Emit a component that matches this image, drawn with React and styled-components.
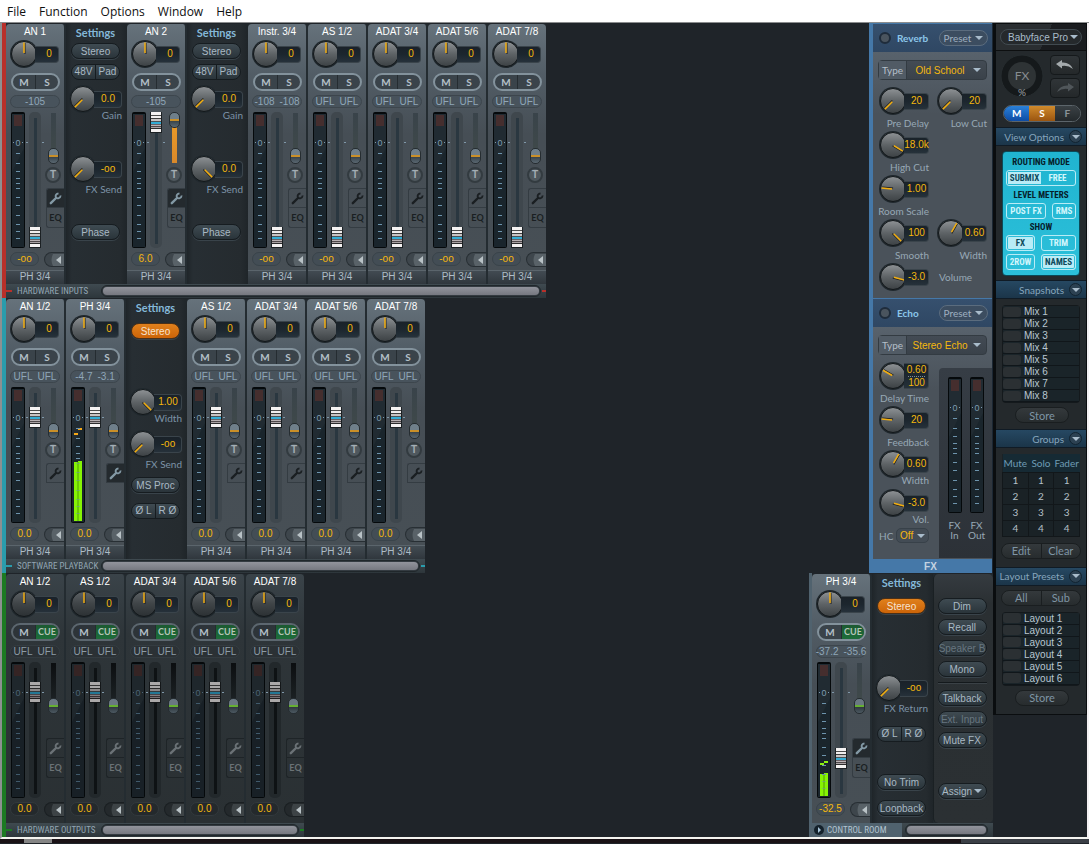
import React from "react";
import styled, { createGlobalStyle } from "styled-components";

const inputs = [
    { name: "AN 1", level: ["-105"], gain: "-oo", fader: 0, open: true, settings: { kind: "mic", gain: "0.0", send: "-oo", sendAngle: -135 } },
    { name: "AN 2", level: ["-105"], gain: "6.0", fader: 115, trim: 36, open: true, settings: { kind: "mic", gain: "0.0", send: "0.0", sendAngle: 135 } },
    { name: "Instr. 3/4", level: ["-108", "-108"], gain: "-oo", fader: 0 },
    { name: "AS 1/2", level: ["UFL", "UFL"], gain: "-oo", fader: 0 },
    { name: "ADAT 3/4", level: ["UFL", "UFL"], gain: "-oo", fader: 0 },
    { name: "ADAT 5/6", level: ["UFL", "UFL"], gain: "-oo", fader: 0 },
    { name: "ADAT 7/8", level: ["UFL", "UFL"], gain: "-oo", fader: 0 },
];

const playback = [
    { name: "AN 1/2", level: ["UFL", "UFL"], gain: "0.0", fader: 95 },
    { name: "PH 3/4", level: ["-4.7", "-3.1"], gain: "0.0", fader: 95, open: true, settings: { kind: "play" }, signal: { top: 75, peaks: [46, 41], peakColor: "#f5a818" } },
    { name: "AS 1/2", level: ["UFL", "UFL"], gain: "0.0", fader: 95 },
    { name: "ADAT 3/4", level: ["UFL", "UFL"], gain: "0.0", fader: 95 },
    { name: "ADAT 5/6", level: ["UFL", "UFL"], gain: "0.0", fader: 95 },
    { name: "ADAT 7/8", level: ["UFL", "UFL"], gain: "0.0", fader: 95 },
];

const outputs = ["AN 1/2", "AS 1/2", "ADAT 3/4", "ADAT 5/6", "ADAT 7/8"].map((name) => (
    { name, level: ["UFL", "UFL"], gain: "0.0", fader: 95 }
));

const phones = { name: "PH 3/4", level: ["-37.2", "-35.6"], gain: "-32.5", fader: 29, open: true, signal: { top: 112, peaks: [101, 99], peakColor: "#8cf010" } };

const ticks = [41, 51, 59, 66, 71, 76, 85, 93, 103, 112, 119, 126];

const Meter = ({ signal, dim }) => (
    <MeterSvg width="14" height="136" viewBox="0 0 14 136" aria-hidden="true">
        <rect x="0" y="0" width="14" height="136" rx="2" fill="#05090b" />
        <rect x="1" y="2" width="12" height="133" fill={dim ? "#182026" : "#1a252c"} />
        <path d="M1 60 L13 36 V2 H1 Z" fill="#ffffff" opacity="0.03" />
        <rect x="3" y="3" width="8" height="11" fill={dim ? "#352424" : "#452e2e"} />
        <text x="7" y="34" textAnchor="middle" fontSize="9" fill={dim ? "#4c6475" : "#7e9bb0"}>0</text>
        <path d="M2 30.5h1M11 30.5h1" stroke={dim ? "#4c6475" : "#7e9bb0"} />
        {signal && (
            <>
                <path d={`M3 ${signal.top}h4V134h-4z M7 ${signal.top - 1}h4V134h-4z`} fill="#86f404" />
                <path d={`M7 ${signal.top}V134`} stroke="#4f9a08" />
                <rect x="3" y={signal.peaks[0]} width="4" height="2" fill={signal.peakColor} />
                <rect x="7" y={signal.peaks[1]} width="4" height="2" fill={signal.peakColor} />
            </>
        )}
        {ticks.map((y) => (
            <rect key={y} x="5" y={y} width="4" height="1" fill={dim ? "#405a6c" : "#6d94ad"} opacity={signal && y > signal.top ? 0.5 : 1} />
        ))}
    </MeterSvg>
);

const WrenchIcon = () => (
    <svg width="13" height="13" viewBox="0 0 13 13" fill="none" stroke="currentColor" aria-hidden="true">
        <path d="M1.800 11.200L7 6" strokeWidth="2.400" strokeLinecap="round" />
        <path d="M9.500 1.300Q6.300 1.800 6.600 4.600Q7.200 6.800 9.300 6.300Q11.500 5.800 11.700 3.500" strokeWidth="1.800" />
    </svg>
);

const Knob = ({ value, value2, angle = 0, dim, size = "strip" }) => (
    <KnobRow>
        <svg width="28" height="28" viewBox="0 0 28 28" aria-hidden="true">
            <defs>
                <linearGradient id={dim ? "knobDim" : "knobLit"} x1="0" y1="0" x2="0" y2="1">
                    <stop offset="0" stopColor={dim ? "#5d6265" : "#8e9295"} />
                    <stop offset="0.5" stopColor={dim ? "#3f4447" : "#5e6366"} />
                    <stop offset="1" stopColor={dim ? "#2b3033" : "#3c4144"} />
                </linearGradient>
            </defs>
            <circle cx="14" cy="14" r="14" fill="#20282d" />
            <circle cx="14" cy="14" r="12.5" fill={`url(#${dim ? "knobDim" : "knobLit"})`} stroke="#12171a" />
            <path d="M15 3V14" stroke="#1c1c1c" transform={`rotate(${angle} 14 14)`} />
            <path d="M14 2.500V13" stroke="#f2ae10" strokeWidth="1.5" transform={`rotate(${angle} 14 14)`} />
        </svg>
        <KnobValue $size={size} $tall={Boolean(value2)}>
            <span>{value}</span>
            {value2 && <KnobSecond>{value2}</KnobSecond>}
        </KnobValue>
    </KnobRow>
);

const Strip = ({ data, dim, cue, green = cue, eq, noTrigger, footer }) => (
    <StripBox $dim={dim} $short={!footer}>
        <StripName>{data.name}</StripName>
        <StripKnob><Knob value="0" dim={dim} /></StripKnob>
        <MuteSolo $dim={dim}>
            <SplitButton>M</SplitButton>
            <SplitButton $cue={cue}>{cue ? "CUE" : "S"}</SplitButton>
        </MuteSolo>
        <LevelBox $dim={dim}>
            {data.level.map((level, i) => <span key={i}>{level}</span>)}
        </LevelBox>
        <StripBody>
            <Meter signal={data.signal} dim={dim} />
            <FaderLane>
                <Fader type="range" min="0" max="115" defaultValue={data.fader} $dim={dim} aria-label={`${data.name} volume`} />
            </FaderLane>
            <SideLane>
                <Trim type="range" min="0" max="36" defaultValue={data.trim || 0} $dim={dim} $green={green} $full={Boolean(data.trim)} aria-label={`${data.name} trim`} />
                {noTrigger ? <TriggerSpace /> : <Trigger>T</Trigger>}
                <Tab $open={data.open} $dim={dim} $top aria-label={`${data.name} settings`}>
                    <WrenchIcon />
                </Tab>
                {eq && <Tab $dim={dim}>EQ</Tab>}
            </SideLane>
        </StripBody>
        <StripBottom>
            <GainBox $dim={dim}>{data.gain}</GainBox>
            <Collapse $dim={dim} aria-label={`Collapse ${data.name}`}>
                <svg width="16" height="12" viewBox="0 0 16 12"><path d="M5 0Q2 6 5 12H16V0Z" fill={dim ? "#3d4346" : "#596268"} /><path d="M13 2V10L8 6Z" fill="#b9c2c6" /></svg>
            </Collapse>
        </StripBottom>
        {footer && <StripFooter>{footer}</StripFooter>}
    </StripBox>
);

const PhaseButtons = ({ $mt }) => (
    <Split $mt={$mt}>
        <SplitHalf>Ø L</SplitHalf>
        <SplitHalf>R Ø</SplitHalf>
    </Split>
);

const Settings = ({ data }) => (
    <SettingsBox>
        <SettingsTitle>Settings</SettingsTitle>
        {data.kind === "mic" && (
            <>
                <Pill $mt={2}>Stereo</Pill>
                <Split $mt={5}><SplitHalf>48V</SplitHalf><SplitHalf>Pad</SplitHalf></Split>
                <KnobCell $mt={5}><Knob size="panel" value={data.gain} angle={-135} /><KnobLabel $tight>Gain</KnobLabel></KnobCell>
                <KnobCell $mt={34}><Knob size="panel" value={data.send} angle={data.sendAngle} /><KnobLabel>FX Send</KnobLabel></KnobCell>
                <Pill $mt={29}>Phase</Pill>
            </>
        )}
        {data.kind === "play" && (
            <>
                <Pill $mt={7} $on>Stereo</Pill>
                <KnobCell $mt={49}><Knob size="panel" value="1.00" angle={135} /><KnobLabel $tight>Width</KnobLabel></KnobCell>
                <KnobCell $mt={6}><Knob size="panel" value="-oo" angle={-135} /><KnobLabel>FX Send</KnobLabel></KnobCell>
                <Pill $mt={7}>MS Proc</Pill>
                <PhaseButtons $mt={10} />
            </>
        )}
        {data.kind === "phones" && (
            <>
                <Pill $mt={7} $on>Stereo</Pill>
                <KnobCell $mt={60}><Knob size="panel" value="-oo" angle={-135} /><KnobLabel>FX Return</KnobLabel></KnobCell>
                <PhaseButtons $mt={12} />
                <Pill $mt={32}>No Trim</Pill>
                <Pill $mt={10}>Loopback</Pill>
            </>
        )}
    </SettingsBox>
);

const SectionBar = ({ label, color }) => (
    <Bar>
        <Notch $color={color} />
        <BarLabel>{label}</BarLabel>
        <ScrollTrack><ScrollThumb /></ScrollTrack>
        <Notch $color={color} $end />
    </Bar>
);

const MixerRow = ({ channels, color, label, ...rest }) => (
    <Row $color={color}>
        <Strips>
            {channels.map((ch) => (
                <React.Fragment key={ch.name}>
                    <Strip data={ch} {...rest} />
                    {ch.settings && <Settings data={ch.settings} />}
                </React.Fragment>
            ))}
        </Strips>
        <SectionBar label={label} color={color} />
    </Row>
);

const FxKnob = ({ label, ...rest }) => (
    <FxCell>
        <Knob size="fx" {...rest} />
        <FxLabel>{label}</FxLabel>
    </FxCell>
);

const FxHead = ({ title }) => (
    <FxHeader>
        <Led aria-label={`${title} on`} />
        <FxTitle>{title}</FxTitle>
        <PresetButton>Preset <Caret /></PresetButton>
    </FxHeader>
);

const TypeSelect = ({ value }) => (
    <TypeRow>
        <TypeName>Type</TypeName>
        <TypeField aria-label="Type" defaultValue={value}><option>{value}</option></TypeField>
        <Caret />
    </TypeRow>
);

const FxPanel = () => (
    <FxColumn>
        <FxSection $height={274}>
            <FxHead title="Reverb" />
            <FxBody>
                <TypeSelect value="Old School" />
                <FxGrid>
                    <FxKnob label="Pre Delay" value="20" angle={-135} />
                    <FxKnob label="Low Cut" value="20" angle={-135} />
                    <FxKnob label="High Cut" value="18.0k" angle={122} />
                    <span />
                    <FxKnob label="Room Scale" value="1.00" angle={-85} />
                    <span />
                    <FxKnob label="Smooth" value="100" angle={135} />
                    <FxKnob label="Width" value="0.60" angle={30} />
                    <Knob size="fx" value="-3.0" angle={105} />
                    <VolumeLabel>Volume</VolumeLabel>
                </FxGrid>
            </FxBody>
        </FxSection>
        <FxSection $height={260}>
            <FxHead title="Echo" />
            <FxBody>
                <TypeSelect value="Stereo Echo" />
                <EchoArea>
                    <EchoKnobs>
                        <FxKnob label="Delay Time" value="0.60" value2="100" angle={-60} />
                        <FxKnob label="Feedback" value="20" angle={-85} />
                        <FxCell><Knob size="fx" value="0.60" angle={30} /><KnobLabel $tight $light>Width</KnobLabel></FxCell>
                        <FxCell $mt={3}><Knob size="fx" value="-3.0" angle={105} /><KnobLabel $tight $light>Vol.</KnobLabel></FxCell>
                        <HighCut>
                            HC
                            <HighCutBox>
                                <HighCutSelect aria-label="HC" defaultValue="Off"><option>Off</option></HighCutSelect>
                                <Caret />
                            </HighCutBox>
                        </HighCut>
                    </EchoKnobs>
                    <FxMeters>
                        <FxMeter><Meter /><span>FX<br />In</span></FxMeter>
                        <FxMeter><Meter /><span>FX<br />Out</span></FxMeter>
                    </FxMeters>
                </EchoArea>
            </FxBody>
        </FxSection>
        <FxFooter>FX</FxFooter>
    </FxColumn>
);

const ControlRoom = () => (
    <RoomBox>
        <Strips>
            <Strip data={phones} cue eq noTrigger />
            <Settings data={{ kind: "phones" }} />
            <RoomButtons>
                <Pill $mt={24}>Dim</Pill>
                <Pill $mt={5}>Recall</Pill>
                <Pill $mt={5} $off>Speaker B</Pill>
                <Pill $mt={5}>Mono</Pill>
                <RoomLine />
                <Pill $mt={6}>Talkback</Pill>
                <Pill $mt={5} $off>Ext. Input</Pill>
                <Pill $mt={5}>Mute FX</Pill>
                <Pill $mt={35}>Assign <Caret /></Pill>
            </RoomButtons>
        </Strips>
        <RoomBar>
            <RoomTitle>
                <PlayDot aria-label="Expand control room">
                    <svg width="10" height="10" viewBox="0 0 10 10"><circle cx="5" cy="5" r="5" fill="#14212b" /><path d="M4 2L7 5L4 8Z" fill="#a9c6da" /></svg>
                </PlayDot>
                CONTROL ROOM
            </RoomTitle>
            <ScrollTrack><ScrollThumb /></ScrollTrack>
        </RoomBar>
    </RoomBox>
);

const SideHeader = ({ children }) => (
    <SideHead>
        <span>{children}</span>
        <SideToggle aria-label={`Toggle ${children}`}><Caret /></SideToggle>
    </SideHead>
);

const SlotList = ({ label, count }) => (
    <Slots>
        {Array.from({ length: count }, (_, i) => (
            <Slot key={i}><SlotLed />{label} {i + 1}</Slot>
        ))}
    </Slots>
);

const SidePanel = () => (
    <Side>
        <DeviceHead>
            <DeviceBox>
                <DeviceSelect aria-label="Device" defaultValue="Babyface Pro"><option>Babyface Pro</option></DeviceSelect>
                <Caret />
            </DeviceBox>
        </DeviceHead>
        <Tools>
            <DspLoad width="44" height="44" viewBox="0 0 44 44" aria-label="DSP load">
                <circle cx="22" cy="22" r="21" fill="#15191b" stroke="#262c2f" />
                <circle cx="22" cy="22" r="14" fill="#2e3335" />
                <text x="22" y="26" textAnchor="middle" fontSize="12" fill="#878d90">FX</text>
                <text x="22" y="42" textAnchor="middle" fontSize="10" fill="#9a9fa2">%</text>
            </DspLoad>
            <UndoColumn>
                <UndoButton aria-label="Undo">
                    <svg width="18" height="10" viewBox="0 0 18 10"><path d="M0 4L6 0V2.500Q14 2 17 9Q12 5 6 6V8.500Z" fill="#a4aaad" /></svg>
                </UndoButton>
                <UndoButton aria-label="Redo">
                    <svg width="18" height="10" viewBox="0 0 18 10"><path d="M18 4L12 0V2.500Q4 2 1 9Q6 5 12 6V8.500Z" fill="#50565a" /></svg>
                </UndoButton>
            </UndoColumn>
        </Tools>
        <Msf>
            <MsfButton $bg="linear-gradient(#2a80d8, #0e4ca4)" $lit>M</MsfButton>
            <MsfButton $bg="linear-gradient(#d08a2c, #9a5510)" $lit>S</MsfButton>
            <MsfButton>F</MsfButton>
        </Msf>
        <SideHeader>View Options</SideHeader>
        <ViewBox>
            <ViewTitle>ROUTING MODE</ViewTitle>
            <ViewJoined><ViewPart $on>SUBMIX</ViewPart><ViewPart>FREE</ViewPart></ViewJoined>
            <ViewTitle>LEVEL METERS</ViewTitle>
            <ViewRow $cols="40px 24px"><ViewButton>POST FX</ViewButton><ViewButton>RMS</ViewButton></ViewRow>
            <ViewTitle>SHOW</ViewTitle>
            <ViewRow $cols="29px 35px"><ViewButton $on>FX</ViewButton><ViewButton>TRIM</ViewButton></ViewRow>
            <ViewRow $cols="29px 35px" $mt={3}><ViewButton>2ROW</ViewButton><ViewButton $on>NAMES</ViewButton></ViewRow>
        </ViewBox>
        <SideHeader>Snapshots</SideHeader>
        <SlotList label="Mix" count={8} />
        <StoreButton>Store</StoreButton>
        <SideHeader>Groups</SideHeader>
        <GroupTable>
            <thead><tr><th>Mute</th><th>Solo</th><th>Fader</th></tr></thead>
            <tbody>
                {[1, 2, 3, 4].map((n) => <tr key={n}><td>{n}</td><td>{n}</td><td>{n}</td></tr>)}
            </tbody>
        </GroupTable>
        <SidePair><SideHalf>Edit</SideHalf><SideHalf>Clear</SideHalf></SidePair>
        <SideHeader>Layout Presets</SideHeader>
        <SidePair $top><SideHalf>All</SideHalf><SideHalf>Sub</SideHalf></SidePair>
        <SlotList label="Layout" count={6} />
        <StoreButton>Store</StoreButton>
    </Side>
);

const App = () => {
    return <>
        <GlobalStyle />
        <Page>
            <MenuBar>
                {["File", "Function", "Options", "Window", "Help"].map((item) => (
                    <MenuItem key={item}>{item}</MenuItem>
                ))}
            </MenuBar>
            <Desk>
                <Mixer>
                    <MixerPart>
                        <div>
                            <MixerRow channels={inputs} color="#b8302a" label="HARDWARE INPUTS" footer="PH 3/4" eq />
                            <MixerRow channels={playback} color="#2a9cac" label="SOFTWARE PLAYBACK" footer="PH 3/4" />
                        </div>
                        <FxPanel />
                    </MixerPart>
                    <MixerPart>
                        <MixerRow channels={outputs} color="#1c7a22" label="HARDWARE OUTPUTS" dim cue eq noTrigger />
                        <ControlRoom />
                    </MixerPart>
                </Mixer>
                <SidePanel />
            </Desk>
            <BottomStrip><BottomTab /><BottomRest /></BottomStrip>
        </Page>
    </>
}

export default App;

const GlobalStyle = createGlobalStyle`
    * {
        box-sizing: border-box;
    }
    body {
        margin: 0;
        background: #1f2429;
        font-family: "Liberation Sans", Arial, sans-serif;
        font-size: 10px;
    }
    button, select, input {
        font: inherit;
        color: inherit;
        margin: 0;
        padding: 0;
        border: 0;
        background: none;
    }
    svg {
        display: block;
        flex: none;
    }
`

const Page = styled.div`
    display: flex;
    flex-direction: column;
    overflow: hidden;
`

const MenuBar = styled.nav`
    display: flex;
    gap: 13px;
    height: 23px;
    padding: 0 7px;
    background: #ffffff;
    border-bottom: 1px solid #8a8c8d;
`

const MenuItem = styled.button`
    height: 22px;
    font-family: "Open Sans", "Noto Sans", sans-serif;
    font-size: 12px;
    color: #101010;
    white-space: nowrap;
`

const Desk = styled.main`
    display: flex;
    background: #1f2429;
    border-left: 2px solid #8d9091;
    border-right: 2px solid #f4f1f3;
    border-bottom: 2px solid #f4f4f0;
`

const Mixer = styled.div`
    flex: 1;
    min-width: 0;
`

const MixerPart = styled.div`
    display: flex;
    justify-content: space-between;
`

const Row = styled.section`
    width: fit-content;
    padding-top: 1px;
    border-left: 4px solid ${(p) => p.$color};
`

const Strips = styled.div`
    display: flex;
    background: #22292e;
`

const StripBox = styled.div`
    display: flex;
    flex-direction: column;
    width: 60px;
    height: ${(p) => (p.$short ? "249px" : "260px")};
    border-right: 2px solid #242c31;
    border-radius: 4px 4px 0 0;
    color: ${(p) => (p.$dim ? "#8b9aa5" : "#8fa6b8")};
    background: ${(p) => (p.$dim
        ? "linear-gradient(#3a4349, #2e3539 60px, #2a3033)"
        : "linear-gradient(#66727b, #525d66 50px, #464e55 110px, #474f55)")};
    &:last-child {
        width: 58px;
        border-right: 0;
    }
`

const StripName = styled.div`
    height: 16px;
    line-height: 16px;
    text-align: center;
    white-space: nowrap;
    color: #ffffff;
`

const StripKnob = styled.div`
    padding-left: 4px;
`

const KnobRow = styled.div`
    display: flex;
    align-items: center;
    height: 28px;
`

const knobWidths = { strip: "24px", panel: "28px", fx: "25px" };

const KnobValue = styled.div`
    display: flex;
    flex-direction: column;
    align-items: center;
    justify-content: center;
    width: ${(p) => knobWidths[p.$size]};
    height: ${(p) => (p.$tall ? "26px" : "17px")};
    margin-left: -3px;
    padding-left: ${(p) => (p.$size === "strip" ? "5px" : "1px")};
    line-height: 12px;
    border: 1px solid #3a444b;
    border-left: 0;
    border-radius: 0 4px 4px 0;
    background: linear-gradient(#1a2229, #1c262e 50%, #26313a);
    color: #f5b80e;
    white-space: nowrap;
`

const KnobSecond = styled.span`
    border-top: 1px dotted #7d8a94;
`

const MuteSolo = styled.div`
    display: flex;
    width: 49px;
    height: 18px;
    margin: 5px 0 4px 5px;
    border: 2px solid ${(p) => (p.$dim ? "#5c676f" : "#83929c")};
    border-radius: 9px;
    overflow: hidden;
    background: ${(p) => (p.$dim ? "#2d3439" : "#3a434a")};
`

const SplitButton = styled.button`
    flex: 1 1 0;
    min-width: 0;
    font-family: Lato, sans-serif;
    font-size: ${(p) => (p.$cue ? "9px" : "10px")};
    font-weight: 700;
    line-height: 14px;
    color: ${(p) => (p.$cue ? "#b5c6b8" : "#b4c0c8")};
    background: ${(p) => (p.$cue ? "linear-gradient(#1c5a31, #1d6e3a)" : "none")};
    & + & {
        border-left: 1px solid #252c31;
    }
`

const LevelBox = styled.div`
    display: flex;
    justify-content: center;
    gap: 5px;
    width: 50px;
    height: 13px;
    margin: 0 0 4px 4px;
    line-height: 11px;
    border: 1px solid ${(p) => (p.$dim ? "#343c41" : "#3d464d")};
    border-radius: 7px;
    background: ${(p) => (p.$dim ? "#2b3135" : "#48535c")};
    white-space: nowrap;
`

const StripBody = styled.div`
    display: flex;
    height: 136px;
    padding-left: 5px;
`

const MeterSvg = styled.svg`
    font-family: "Liberation Sans", Arial, sans-serif;
`

const FaderLane = styled.div`
    display: flex;
    justify-content: center;
    width: 20px;
    background:
        linear-gradient(#7f97a8, #7f97a8) 1px 30px / 2px 1px no-repeat,
        linear-gradient(#7f97a8, #7f97a8) 17px 30px / 2px 1px no-repeat;
`

const Fader = styled.input`
    appearance: none;
    writing-mode: vertical-lr;
    direction: rtl;
    width: 12px;
    height: 136px;
    border-radius: 5px;
    background:
        linear-gradient(${(p) => (p.$dim ? "#0e1214, #0e1214" : "#2a3740, #2a3740")}) 5px 6px / 3px 126px no-repeat,
        ${(p) => (p.$dim ? "#22282b" : "#3f474d")};
    &::-webkit-slider-runnable-track {
        width: 12px;
        height: 136px;
    }
    &::-webkit-slider-thumb {
        appearance: none;
        width: 12px;
        height: 21px;
        border: 1px solid #1c2124;
        border-width: 0 1px 1px 1px;
        filter: ${(p) => (p.$dim ? "brightness(0.7)" : "none")};
        background: linear-gradient(
            #f4f2f2 0 3px, #4c4c4c 3px 4px, #f0eeee 4px 6px, #3c3c3c 6px 7px,
            #c8c4c4 7px 9px, #4c5357 9px 10px, #34acd4 10px 12px, #6a6064 12px 13px,
            #b9b2b4 13px 14px, #4e484a 14px 15px, #a9a2a4 15px 16px, #2c2c2c 16px 17px, #f4f2f2 17px 20px
        );
    }
`

const SideLane = styled.div`
    display: flex;
    flex-direction: column;
    align-items: flex-end;
    width: 19px;
`

const Trim = styled.input`
    appearance: none;
    writing-mode: vertical-lr;
    direction: rtl;
    width: 11px;
    height: 52px;
    margin-right: 5px;
    border-radius: 5px;
    background:
        linear-gradient(${(p) => (p.$full ? "#f0a028, #d8882a" : p.$dim ? "#0b0e10, #22282b" : "#39434a, #414b4a")}) 3px 1px / 5px 50px no-repeat;
    &::-webkit-slider-runnable-track {
        width: 11px;
        height: 52px;
    }
    &::-webkit-slider-thumb {
        appearance: none;
        width: 11px;
        height: 16px;
        border: 1px solid #262d31;
        border-radius: 5px;
        background: ${(p) => (p.$green
            ? "linear-gradient(#6a7882 6px, #66b032 6px 8px, #2f383e 8px, #4c5962)"
            : "linear-gradient(#6f7f8a 6px, #c98f28 6px 8px, #38434a 8px, #5a6872)")};
    }
`

const Trigger = styled.button`
    width: 16px;
    height: 16px;
    margin: 3px 3px 5px 0;
    border: 2px solid #333b40;
    border-radius: 50%;
    font-weight: 700;
    line-height: 12px;
    color: #a3adb4;
    background: #4f585e;
`

const TriggerSpace = styled.div`
    height: 24px;
`

const Tab = styled.button`
    display: flex;
    align-items: center;
    justify-content: center;
    width: 18px;
    height: 20px;
    border: 1px solid ${(p) => (p.$dim ? "#1e2427" : "#343c42")};
    border-right: 0;
    border-top-width: ${(p) => (p.$top ? "1px" : "0")};
    border-radius: ${(p) => (p.$top ? "3px 0 0 0" : "0 0 0 3px")};
    font-family: Lato, sans-serif;
    font-size: 9px;
    font-weight: 700;
    color: ${(p) => (p.$open ? "#8399a5" : p.$dim ? "#6b7276" : "#1a1f22")};
    background: ${(p) => (p.$open ? "#242a2e" : "none")};
`

const StripBottom = styled.div`
    display: flex;
    justify-content: space-between;
    height: 15px;
    margin: 4px 0 3px;
    padding-left: 4px;
`

const GainBox = styled.div`
    width: 29px;
    height: 14px;
    line-height: 12px;
    text-align: center;
    border: 1px solid ${(p) => (p.$dim ? "#32393d" : "#39434a")};
    border-radius: 7px;
    color: #f5b80e;
    background: ${(p) => (p.$dim ? "#24292c" : "#434d55")};
`

const Collapse = styled.button`
    display: flex;
    align-items: center;
    justify-content: flex-end;
    width: 20px;
    height: 15px;
    border: 1px solid ${(p) => (p.$dim ? "#1a1f22" : "#282f34")};
    border-right: 0;
    border-radius: 8px 0 0 8px;
    background: ${(p) => (p.$dim ? "#24292c" : "#3e464c")};
`

const StripFooter = styled.div`
    height: 14px;
    line-height: 12px;
    text-align: center;
    border-top: 1px solid #5b656c;
    background: linear-gradient(#424b52, #30373d);
    color: #aebcc6;
`

const SettingsBox = styled.div`
    display: flex;
    flex-direction: column;
    align-items: center;
    width: 61px;
    padding: 1px 2px 0 0;
    background: linear-gradient(90deg, #1f2529, #272e33 6px, #252b2f 54px, #1f2529);
`

const SettingsTitle = styled.div`
    height: 16px;
    font-family: Lato, sans-serif;
    font-size: 11px;
    font-weight: 700;
    line-height: 16px;
    color: #84b8d8;
`

const Pill = styled.button`
    display: flex;
    flex: none;
    align-items: center;
    justify-content: center;
    gap: 2px;
    width: 49px;
    height: 16px;
    margin-top: ${(p) => p.$mt}px;
    border: 1px solid ${(p) => (p.$on ? "#4a3018" : "#161c20")};
    border-radius: 8px;
    white-space: nowrap;
    color: ${(p) => (p.$on ? "#f6e3d0" : p.$off ? "#677680" : "#a9b9c4")};
    background: ${(p) => (p.$on ? "linear-gradient(#e0801c, #cc6408)" : "linear-gradient(#3f4b52, #2a343a)")};
    box-shadow: 0 1px 0 #39434a;
`

const Split = styled.div`
    display: flex;
    flex: none;
    width: 49px;
    height: 16px;
    margin-top: ${(p) => p.$mt}px;
    border: 1px solid #161c20;
    border-radius: 8px;
    overflow: hidden;
    background: linear-gradient(#3f4b52, #2a343a);
`

const SplitHalf = styled.button`
    flex: 1;
    line-height: 14px;
    color: #a9b9c4;
    white-space: nowrap;
    & + & {
        border-left: 1px solid #161c20;
    }
`

const KnobCell = styled.div`
    width: 53px;
    flex: none;
    margin-top: ${(p) => p.$mt}px;
`

const KnobLabel = styled.div`
    height: 12px;
    margin-top: ${(p) => (p.$tight ? "-4px" : "0")};
    font-family: Lato, sans-serif;
    font-size: 10px;
    line-height: 12px;
    text-align: right;
    white-space: nowrap;
    color: ${(p) => (p.$light ? "#97a8b5" : "#7d93a7")};
`

const Bar = styled.div`
    display: flex;
    align-items: center;
    height: 14px;
    background: linear-gradient(#3f4a50, #2d363b);
`

const Notch = styled.span`
    width: ${(p) => (p.$end ? "4px" : "6px")};
    height: 2px;
    margin-left: ${(p) => (p.$end ? "1px" : "0")};
    background: ${(p) => p.$color};
`

const BarLabel = styled.div`
    width: 84px;
    margin-left: 5px;
    font-family: "Roboto Condensed", "Liberation Sans Narrow", Lato, sans-serif;
    font-size: 9px;
    line-height: 14px;
    white-space: nowrap;
    color: #93a6b3;
`

const ScrollTrack = styled.div`
    flex: 1;
    height: 12px;
    padding: 1px;
    border: 1px solid #20272b;
    border-radius: 6px;
    background: #343b41;
`

const ScrollThumb = styled.div`
    height: 8px;
    border-radius: 4px;
    background: linear-gradient(#92949c, #767880);
`

const Caret = styled.i`
    flex: none;
    width: 0;
    height: 0;
    border: 4px solid transparent;
    border-top-color: #a9bccb;
    border-bottom: 0;
    pointer-events: none;
`

const FxColumn = styled.section`
    width: 124px;
    padding-top: 1px;
    border-left: 4px solid #4578a8;
    border-right: 1px solid #1b2733;
    background: #4578a8;
`

const FxSection = styled.div`
    height: ${(p) => p.$height}px;
    margin-bottom: 1px;
    background: linear-gradient(#58626c 28px, #4a525a 90px, #4a525a);
`

const FxHeader = styled.header`
    display: flex;
    align-items: center;
    height: 28px;
    padding: 0 4px 0 6px;
    background: linear-gradient(#36506e, #2f4763);
`

const Led = styled.button`
    width: 12px;
    height: 12px;
    border: 2px solid #1f2c3b;
    border-radius: 50%;
    background: #4a545e;
`

const FxTitle = styled.span`
    flex: 1;
    margin-left: 6px;
    font-family: Lato, sans-serif;
    font-size: 10px;
    font-weight: 700;
    color: #8cc6ea;
`

const PresetButton = styled.button`
    display: flex;
    align-items: center;
    justify-content: center;
    gap: 4px;
    width: 49px;
    height: 16px;
    border: 1px solid #5b6c7e;
    border-radius: 8px;
    font-family: Lato, sans-serif;
    color: #9fb0c0;
    background: #3c4d60;
`

const FxBody = styled.div`
    padding: 8px 0 0 5px;
`

const TypeRow = styled.label`
    display: flex;
    align-items: center;
    height: 20px;
    margin-right: 5px;
    padding-right: 5px;
    border: 1px solid #333b42;
    border-radius: 4px;
    background: linear-gradient(#434b54, #3a424a);
`

const TypeName = styled.span`
    width: 28px;
    font-family: Lato, sans-serif;
    line-height: 18px;
    text-align: center;
    border-right: 1px solid #333b42;
    color: #b4bfc9;
    background: #515b65;
`

const TypeField = styled.select`
    flex: 1;
    min-width: 0;
    appearance: none;
    text-align: center;
    color: #f5b80e;
`

const FxGrid = styled.div`
    display: grid;
    grid-template-columns: 50px 50px;
    column-gap: 8px;
    padding: 7px 0 0 1px;
`

const FxCell = styled.div`
    width: 50px;
    margin-top: ${(p) => p.$mt || 0}px;
`

const FxLabel = styled.div`
    display: flex;
    justify-content: flex-end;
    height: 16px;
    font-family: Lato, sans-serif;
    line-height: 16px;
    white-space: nowrap;
    color: #97a8b5;
`

const VolumeLabel = styled.span`
    padding-left: 2px;
    font-family: Lato, sans-serif;
    line-height: 28px;
    color: #97a8b5;
`

const EchoArea = styled.div`
    display: flex;
    justify-content: space-between;
`

const EchoKnobs = styled.div`
    padding: 7px 0 0 1px;
`

const HighCut = styled.div`
    display: flex;
    align-items: center;
    justify-content: space-between;
    height: 15px;
    margin-top: 3px;
    font-family: Lato, sans-serif;
    color: #97a8b5;
`

const HighCutBox = styled.div`
    display: flex;
    align-items: center;
    width: 33px;
    height: 15px;
    padding: 0 3px;
    border: 1px solid #384149;
    border-radius: 5px;
    font-family: "Liberation Sans", Arial, sans-serif;
    background: #434c55;
`

const HighCutSelect = styled.select`
    flex: 1;
    min-width: 0;
    appearance: none;
    color: #f5b80e;
`

const FxMeters = styled.div`
    display: flex;
    justify-content: center;
    gap: 7px;
    width: 53px;
    height: 190px;
    margin-top: 13px;
    padding-top: 9px;
    border-radius: 4px 0 0 0;
    background: linear-gradient(#363d45, #2c3137);
`

const FxMeter = styled.div`
    display: flex;
    flex-direction: column;
    align-items: center;
    gap: 7px;
    width: 15px;
    font-family: Lato, sans-serif;
    line-height: 10px;
    text-align: center;
    color: #97a8b5;
`

const FxFooter = styled.div`
    height: 13px;
    padding-right: 4px;
    line-height: 13px;
    font-weight: 700;
    text-align: center;
    color: #c3d3e2;
`

const RoomBox = styled.section`
    width: 184px;
    padding-top: 1px;
    border-left: 3px solid #50626e;
`

const RoomButtons = styled.div`
    display: flex;
    flex: 1;
    flex-direction: column;
    align-items: center;
    padding-right: 3px;
    border-left: 1px solid #1a2023;
    border-radius: 5px;
    background: linear-gradient(#353b40, #2a2f32 30px, #2b3033);
`

const RoomLine = styled.hr`
    width: 49px;
    height: 2px;
    margin: 5px 0 0;
    border: 0;
    border-top: 1px solid #14191c;
    border-bottom: 1px solid #3a4146;
`

const RoomBar = styled.div`
    display: flex;
    align-items: center;
    height: 14px;
    padding-right: 5px;
    background: linear-gradient(#3f4a50, #2d363b);
`

const RoomTitle = styled.div`
    display: flex;
    align-items: center;
    gap: 3px;
    width: 90px;
    height: 14px;
    margin-right: 3px;
    padding-left: 2px;
    font-family: "Roboto Condensed", "Liberation Sans Narrow", Lato, sans-serif;
    font-size: 9px;
    white-space: nowrap;
    color: #b3c4d0;
    background: #50626e;
`

const PlayDot = styled.button`
    width: 10px;
    height: 10px;
`

const Side = styled.aside`
    align-self: flex-start;
    width: 94px;
    padding-bottom: 8px;
    border: 3px solid #0a0d0f;
    border-width: 1px 1px 1px 3px;
    background: #24292c;
`

const DeviceHead = styled.div`
    height: 27px;
    padding: 5px 4px 0;
    background: linear-gradient(115deg, #2a2e31 55%, #1a1c1f 55%);
    border-bottom: 1px solid #0d0f10;
`

const DeviceBox = styled.div`
    display: flex;
    align-items: center;
    height: 16px;
    padding: 0 3px 0 7px;
    border: 1px solid #414a50;
    border-radius: 8px;
    color: #a9bcc9;
    background: #25292c;
`

const DeviceSelect = styled.select`
    flex: 1;
    min-width: 0;
    appearance: none;
`

const DspLoad = styled.svg`
    font-family: Lato, sans-serif;
`

const Tools = styled.div`
    display: flex;
    justify-content: space-between;
    padding: 3px 6px 0 4px;
`

const UndoColumn = styled.div`
    display: flex;
    flex-direction: column;
    gap: 3px;
    padding-top: 1px;
`

const UndoButton = styled.button`
    display: flex;
    align-items: center;
    justify-content: center;
    width: 30px;
    height: 20px;
    border: 1px solid #15191b;
    border-radius: 4px;
    background: linear-gradient(#303538, #24282a);
`

const Msf = styled.div`
    display: flex;
    height: 17px;
    margin: 7px 5px 5px 7px;
    border: 1px solid #5c656b;
    border-radius: 9px;
    overflow: hidden;
`

const MsfButton = styled.button`
    flex: 1;
    font-family: Lato, sans-serif;
    font-weight: 700;
    line-height: 15px;
    color: ${(p) => (p.$lit ? "#ffffff" : "#8b949a")};
    background: ${(p) => p.$bg || "linear-gradient(#3a4145, #24292c)"};
`

const SideHead = styled.header`
    display: flex;
    align-items: center;
    justify-content: flex-end;
    gap: 5px;
    height: 19px;
    padding-right: 4px;
    border: 1px solid #101b25;
    border-width: 1px 0;
    font-family: Lato, sans-serif;
    font-size: 10px;
    white-space: nowrap;
    color: #86a5bd;
    background: linear-gradient(#264862, #1b3549);
`

const SideToggle = styled.button`
    display: flex;
    align-items: center;
    justify-content: center;
    width: 13px;
    height: 13px;
    border: 1px solid #122330;
    border-radius: 50%;
    background: #2c4152;
`

const condensed = `
    font-family: "Roboto Condensed", "Liberation Sans Narrow", Lato, sans-serif;
    font-size: 9px;
    font-weight: 700;
    white-space: nowrap;
`

const ViewBox = styled.div`
    margin: 5px 6px 4px;
    padding: 2px 3px 5px;
    border: 1px solid #0b4a58;
    border-radius: 4px;
    background: linear-gradient(#20b4d0, #2cc0da);
`

const ViewTitle = styled.div`
    ${condensed}
    display: flex;
    justify-content: center;
    height: 16px;
    line-height: 16px;
    color: #06202a;
`

const ViewJoined = styled.div`
    display: flex;
    height: 16px;
    padding: 1px;
    margin-bottom: 1px;
    border: 1px solid #b8ecf6;
    border-radius: 3px;
`

const ViewPart = styled.button`
    ${condensed}
    flex: 1;
    line-height: 12px;
    color: ${(p) => (p.$on ? "#0d4a5c" : "#d2f6fc")};
    background: ${(p) => (p.$on ? "#b8ecf6" : "none")};
`

const ViewRow = styled.div`
    display: grid;
    grid-template-columns: ${(p) => p.$cols};
    justify-content: space-between;
    margin-top: ${(p) => p.$mt || 0}px;
`

const ViewButton = styled.button`
    ${condensed}
    display: flex;
    align-items: center;
    justify-content: center;
    height: 16px;
    border: 1px solid #b8ecf6;
    border-radius: 3px;
    color: ${(p) => (p.$on ? "#0d4a5c" : "#d2f6fc")};
    background: ${(p) => (p.$on ? "#b8ecf6" : "none")};
    box-shadow: ${(p) => (p.$on ? "inset 0 0 0 1px #2cbcd8" : "none")};
`

const Slots = styled.div`
    margin: 6px 6px 0;
    padding: 1px;
    border-radius: 4px;
    background: #14191c;
`

const Slot = styled.button`
    display: flex;
    align-items: center;
    gap: 3px;
    width: 100%;
    height: 12px;
    border-bottom: 1px solid #10161a;
    color: #b9c7d1;
    background: #1a2429;
`

const SlotLed = styled.span`
    width: 18px;
    height: 10px;
    border-radius: 3px;
    background: #2b3033;
`

const StoreButton = styled.button`
    display: block;
    width: 54px;
    height: 16px;
    margin: 4px 0 0 19px;
    border: 1px solid #1a1e20;
    border-radius: 8px;
    font-family: Lato, sans-serif;
    font-size: 11px;
    line-height: 13px;
    color: #7f95a5;
    background: linear-gradient(#34393c, #272c2e);
    & + header {
        margin-top: 6px;
    }
`

const GroupTable = styled.table`
    width: 78px;
    margin: 6px 0 0 6px;
    border-collapse: collapse;
    table-layout: fixed;
    font-family: Lato, sans-serif;
    background: #1a2226;
    th {
        height: 18px;
        padding: 0;
        font-weight: 400;
        color: #6f9cb4;
        background: #162a34;
    }
    td {
        height: 16px;
        padding: 0;
        text-align: center;
        border: 1px solid #12171a;
        color: #b5c0c8;
    }
`

const SidePair = styled.div`
    display: flex;
    height: 16px;
    margin: ${(p) => (p.$top ? "4px 5px 0" : "6px 5px 8px")};
    border: 1px solid #1a1e20;
    border-radius: 8px;
    overflow: hidden;
    background: linear-gradient(#34393c, #272c2e);
`

const SideHalf = styled.button`
    flex: 1;
    font-family: Lato, sans-serif;
    font-size: 11px;
    line-height: 13px;
    color: #7f95a5;
    & + & {
        border-left: 1px solid #1a1e20;
    }
`

const BottomStrip = styled.footer`
    display: flex;
    justify-content: space-between;
    height: 4px;
    padding-left: 24px;
    background: #1a1216;
`

const BottomTab = styled.div`
    width: 28px;
    background: #858585;
`

const BottomRest = styled.div`
    width: 12%;
    background: #3b3f46;
`
